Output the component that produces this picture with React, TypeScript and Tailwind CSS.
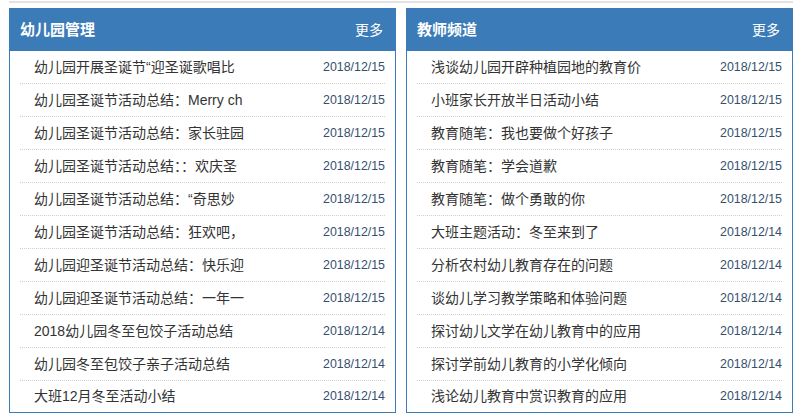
import React from "react";

type Item = { t: string; d: string };

const left: Item[] = [
  { t: "幼儿园开展圣诞节“迎圣诞歌唱比", d: "2018/12/15" },
  { t: "幼儿园圣诞节活动总结：Merry ch", d: "2018/12/15" },
  { t: "幼儿园圣诞节活动总结：家长驻园", d: "2018/12/15" },
  { t: "幼儿园圣诞节活动总结：：欢庆圣", d: "2018/12/15" },
  { t: "幼儿园圣诞节活动总结：“奇思妙", d: "2018/12/15" },
  { t: "幼儿园圣诞节活动总结：狂欢吧，", d: "2018/12/15" },
  { t: "幼儿园迎圣诞节活动总结：快乐迎", d: "2018/12/15" },
  { t: "幼儿园迎圣诞节活动总结：一年一", d: "2018/12/15" },
  { t: "2018幼儿园冬至包饺子活动总结", d: "2018/12/14" },
  { t: "幼儿园冬至包饺子亲子活动总结", d: "2018/12/14" },
  { t: "大班12月冬至活动小结", d: "2018/12/14" },
];

const right: Item[] = [
  { t: "浅谈幼儿园开辟种植园地的教育价", d: "2018/12/15" },
  { t: "小班家长开放半日活动小结", d: "2018/12/15" },
  { t: "教育随笔：我也要做个好孩子", d: "2018/12/15" },
  { t: "教育随笔：学会道歉", d: "2018/12/15" },
  { t: "教育随笔：做个勇敢的你", d: "2018/12/15" },
  { t: "大班主题活动：冬至来到了", d: "2018/12/14" },
  { t: "分析农村幼儿教育存在的问题", d: "2018/12/14" },
  { t: "谈幼儿学习教学策略和体验问题", d: "2018/12/14" },
  { t: "探讨幼儿文学在幼儿教育中的应用", d: "2018/12/14" },
  { t: "探讨学前幼儿教育的小学化倾向", d: "2018/12/14" },
  { t: "浅论幼儿教育中赏识教育的应用", d: "2018/12/14" },
];

function Panel({ title, items }: { title: string; items: Item[] }) {
  return (
    <div className="w-[387px] border border-[#3b7bb8] bg-white">
      <div className="h-[42px] bg-[#3b7bb8] flex items-center justify-between px-[10px] text-white">
        <span className="text-[15px] font-bold">{title}</span>
        <span className="text-[14px] pr-[2px]">更多</span>
      </div>
      <ul className="px-[10px]">
        {items.map((it, i) => (
          <li
            key={i}
            className={
              i === items.length - 1
                ? "h-[31px] flex items-center justify-between pl-[14px]"
                : "h-[33px] flex items-center justify-between pl-[14px] border-b border-dotted border-[#cfcfcf]"
            }
          >
            <span className="text-[14px] text-[#333] whitespace-nowrap">{it.t}</span>
            <span className="text-[12.4px] text-[#35506e] font-['Liberation_Sans',Arial,sans-serif]">{it.d}</span>
          </li>
        ))}
      </ul>
    </div>
  );
}

export default function App() {
  return (
    <div
      className="w-[797px] h-[419px] bg-white overflow-hidden"
      style={{ fontFamily: '"Liberation Sans", "Noto Sans CJK SC", sans-serif' }}
    >
      <div className="ml-[9px] w-[784px] h-[2px] mt-[1px] bg-[#e3e3e3]" />
      <div className="flex gap-[10px] ml-[9px] mt-[5px]">
        <Panel title="幼儿园管理" items={left} />
        <Panel title="教师频道" items={right} />
      </div>
    </div>
  );
}
